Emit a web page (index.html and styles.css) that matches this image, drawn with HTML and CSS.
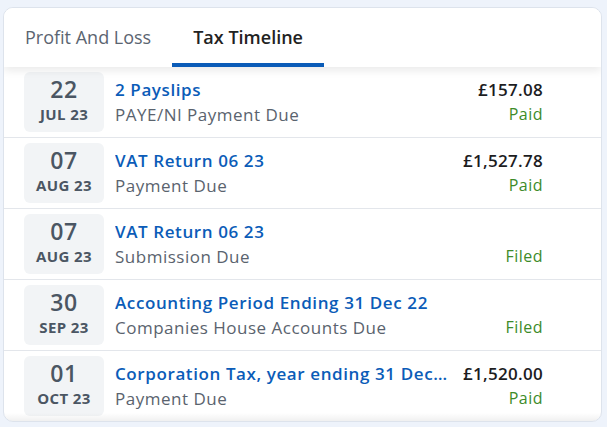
FILE: index.html
```html
<!DOCTYPE html>
<html lang="en">
<head>
	<meta charset="UTF-8">
	<meta name="viewport" content="width=device-width, initial-scale=1.0">
	<title>Tax Timeline</title>
	<link rel="stylesheet" href="styles.css">
</head>
<body>
	<div class="card">
		<div class="tabs">
			<div class="tab">Profit And Loss</div>
			<div class="tab active">Tax Timeline</div>
		</div>
		<div class="timeline">
			<div class="row">
				<div class="date">
					<span class="day">22</span>
					<span class="month">JUL 23</span>
				</div>
				<div class="info">
					<div class="line">
						<a class="title" href="#">2 Payslips</a>
						<span class="amount">£157.08</span>
					</div>
					<div class="line">
						<span class="subtitle">PAYE/NI Payment Due</span>
						<span class="status">Paid</span>
					</div>
				</div>
			</div>
			<div class="row">
				<div class="date">
					<span class="day">07</span>
					<span class="month">AUG 23</span>
				</div>
				<div class="info">
					<div class="line">
						<a class="title" href="#">VAT Return 06 23</a>
						<span class="amount">£1,527.78</span>
					</div>
					<div class="line">
						<span class="subtitle">Payment Due</span>
						<span class="status">Paid</span>
					</div>
				</div>
			</div>
			<div class="row">
				<div class="date">
					<span class="day">07</span>
					<span class="month">AUG 23</span>
				</div>
				<div class="info">
					<div class="line">
						<a class="title" href="#">VAT Return 06 23</a>
					</div>
					<div class="line">
						<span class="subtitle">Submission Due</span>
						<span class="status">Filed</span>
					</div>
				</div>
			</div>
			<div class="row">
				<div class="date">
					<span class="day">30</span>
					<span class="month">SEP 23</span>
				</div>
				<div class="info">
					<div class="line">
						<a class="title" href="#">Accounting Period Ending 31 Dec 22</a>
					</div>
					<div class="line">
						<span class="subtitle">Companies House Accounts Due</span>
						<span class="status">Filed</span>
					</div>
				</div>
			</div>
			<div class="row">
				<div class="date">
					<span class="day">01</span>
					<span class="month">OCT 23</span>
				</div>
				<div class="info">
					<div class="line">
						<a class="title" href="#">Corporation Tax, year ending 31 Dec 22</a>
						<span class="amount">£1,520.00</span>
					</div>
					<div class="line">
						<span class="subtitle">Payment Due</span>
						<span class="status">Paid</span>
					</div>
				</div>
			</div>
		</div>
	</div>
</body>
</html>
```

FILE: styles.css
```css
body {
	margin: 0;
	padding: 7px 5px 0 3px;
	background-color: #eef3fb;
	font-family: "Open Sans", Arial, sans-serif;
}

.card {
	background-color: #fff;
	border: 1px solid #dde3ec;
	border-radius: 10px;
	overflow: hidden;
	position: relative;
}

.card::after {
	content: "";
	position: absolute;
	left: 0;
	right: 0;
	bottom: 0;
	height: 8px;
	background: linear-gradient(rgba(0, 0, 0, 0), rgba(0, 0, 0, 0.06));
}

.tabs {
	display: flex;
	position: relative;
	z-index: 1;
	background-color: #fff;
	box-shadow: 0 4px 8px rgba(0, 0, 0, 0.08);
}

.tab {
	padding: 17px 21px 14px;
	font-size: 18px;
	line-height: 24px;
	color: #5b6571;
	border-bottom: 4px solid transparent;
	cursor: pointer;
}

.tab.active {
	color: #222;
	font-weight: 600;
	border-bottom-color: #0b5cb8;
}

.row {
	display: flex;
	align-items: center;
	padding: 5px 58px 5px 20px;
	border-bottom: 1px solid #e3e6eb;
}

.row:last-child {
	border-bottom: none;
}

.date {
	flex: none;
	width: 80px;
	height: 60px;
	box-sizing: border-box;
	padding-top: 5px;
	background-color: #f2f4f6;
	border-radius: 6px;
	display: flex;
	flex-direction: column;
	align-items: center;
	color: #4b5663;
}

.day {
	font-size: 23px;
	line-height: 24px;
	font-weight: 600;
	letter-spacing: 0.5px;
}

.month {
	margin-top: 5px;
	font-size: 15px;
	line-height: 16px;
	font-weight: 700;
	letter-spacing: 0.4px;
}

.info {
	flex: 1;
	min-width: 0;
	margin-left: 11px;
}

.line {
	display: flex;
	justify-content: space-between;
	line-height: 25px;
}

.title {
	font-size: 17px;
	font-weight: 600;
	letter-spacing: 0.6px;
	color: #0b5cb8;
	text-decoration: none;
	white-space: nowrap;
	overflow: hidden;
	text-overflow: ellipsis;
	margin-right: 12px;
}

.amount {
	flex: none;
	font-size: 17px;
	font-weight: 600;
	letter-spacing: 0.3px;
	color: #1d1d1f;
}

.subtitle {
	font-size: 17px;
	letter-spacing: 0.5px;
	color: #5a636e;
}

.status {
	flex: none;
	margin-left: auto;
	font-size: 16px;
	letter-spacing: 0.5px;
	color: #3d8b2a;
}
```
